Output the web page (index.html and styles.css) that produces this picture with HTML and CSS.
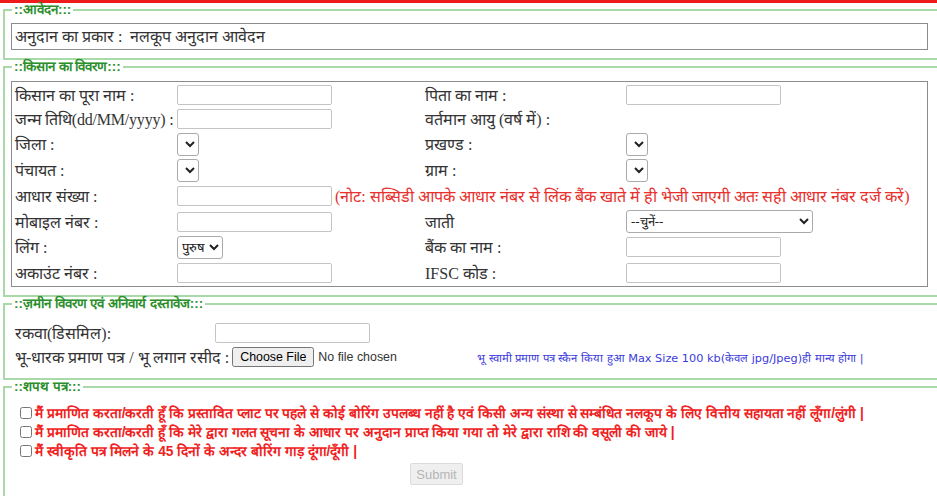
FILE: index.html
```html
<!DOCTYPE html>
<html lang="hi">
<head>
<meta charset="utf-8">
<title>नलकूप अनुदान आवेदन</title>
<link rel="stylesheet" href="styles.css">
</head>
<body>
<div class="topbar"></div>
<div class="page">
  <fieldset class="fs fs-apply">
    <legend>::आवेदन:::</legend>
    <div class="box type-box">अनुदान का प्रकार :&nbsp; नलकूप अनुदान आवेदन</div>
  </fieldset>

  <fieldset class="fs fs-farmer">
    <legend>::किसान का विवरण:::</legend>
    <div class="box farmer-grid">
      <div class="cell">किसान का पूरा नाम :</div>
      <div class="cell"><input class="txt" type="text"></div>
      <div class="cell">पिता का नाम :</div>
      <div class="cell"><input class="txt" type="text"></div>

      <div class="cell dob">जन्म तिथि(dd/MM/yyyy) :</div>
      <div class="cell"><input class="txt" type="text"></div>
      <div class="cell">वर्तमान आयु (वर्ष में) :</div>
      <div class="cell"></div>

      <div class="cell">जिला :</div>
      <div class="cell"><select class="sel sel-empty"></select></div>
      <div class="cell">प्रखण्ड :</div>
      <div class="cell"><select class="sel sel-empty"></select></div>

      <div class="cell">पंचायत :</div>
      <div class="cell"><select class="sel sel-empty"></select></div>
      <div class="cell">ग्राम :</div>
      <div class="cell"><select class="sel sel-empty"></select></div>

      <div class="cell">आधार संख्या :</div>
      <div class="cell span3"><input class="txt" type="text"><span class="note">(नोट: सब्सिडी आपके आधार नंबर से लिंक बैंक खाते में ही भेजी जाएगी अतः सही आधार नंबर दर्ज करें)</span></div>

      <div class="cell">मोबाइल नंबर :</div>
      <div class="cell"><input class="txt" type="text"></div>
      <div class="cell">जाती</div>
      <div class="cell"><select class="sel sel-caste"><option>--चुनें--</option></select></div>

      <div class="cell">लिंग :</div>
      <div class="cell"><select class="sel sel-gender"><option>पुरुष</option></select></div>
      <div class="cell">बैंक का नाम :</div>
      <div class="cell"><input class="txt" type="text"></div>

      <div class="cell">अकाउंट नंबर :</div>
      <div class="cell"><input class="txt" type="text"></div>
      <div class="cell">IFSC कोड :</div>
      <div class="cell"><input class="txt" type="text"></div>
    </div>
  </fieldset>

  <fieldset class="fs fs-land">
    <legend>::ज़मीन विवरण एवं अनिवार्य दस्तावेज:::</legend>
    <div class="land-row">
      <span class="land-label">रकवा(डिसमिल):</span>
      <input class="txt" type="text">
    </div>
    <div class="land-row">
      <span class="doc-group">भू-धारक प्रमाण पत्र / भू लगान रसीद : <input class="file" type="file"></span>
      <span class="doc-hint">भू स्वामी प्रमाण पत्र स्कैन किया हुआ Max Size 100 kb(केवल jpg/Jpeg)ही मान्य होगा |</span>
    </div>
  </fieldset>

  <fieldset class="fs fs-oath">
    <legend>::शपथ पत्र:::</legend>
    <label class="oath"><input type="checkbox">मैं प्रमाणित करता/करती हूँ कि प्रस्तावित प्लाट पर पहले से कोई बोरिंग उपलब्ध नहीं है एवं किसी अन्य संस्था से सम्बंधित नलकूप के लिए वित्तीय सहायता नहीं लूँगा/लुंगी |</label>
    <label class="oath"><input type="checkbox">मैं प्रमाणित करता/करती हूँ कि मेरे द्वारा गलत सूचना के आधार पर अनुदान प्राप्त किया गया तो मेरे द्वारा राशि की वसूली की जाये |</label>
    <label class="oath"><input type="checkbox">मैं स्वीकृति पत्र मिलने के 45 दिनों के अन्दर बोरिंग गाड़ दूंगा/दूँगी |</label>
    <button class="submit" type="button" disabled>Submit</button>
  </fieldset>
</div>
</body>
</html>
```

FILE: styles.css
```css
html, body {
  margin: 0;
  padding: 0;
  overflow: hidden;
  background: #fff;
}
body {
  width: 937px;
  height: 496px;
  font-family: "Liberation Serif", serif;
  font-size: 16px;
  color: #333;
}
.topbar {
  height: 3px;
  background: #ee1b1b;
}
.page {
  width: 960px;
  padding-left: 3px;
}
.fs {
  margin: 0;
  min-width: 0;
  width: 947px;
  box-sizing: border-box;
  border: 2px solid #a9d8a9;
  padding: 6px 20px 8px 6px;
}
.fs legend {
  font-family: "Liberation Sans", sans-serif;
  font-weight: bold;
  font-size: 13.4px;
  line-height: 14px;
  color: #2b8f2b;
  padding: 0 2px;
  margin-left: 1px;
}
.box {
  border: 1px solid #8c8c8c;
  box-sizing: border-box;
}
.type-box {
  height: 27px;
  line-height: 25px;
  padding-left: 3px;
  color: #333;
}
.fs-farmer {
  padding-top: 7px;
}
.farmer-grid {
  display: grid;
  grid-template-columns: 162px 248px 201px 1fr;
  grid-template-rows: 25px 24px 26px 26px 26px 25px 26px 26px;
  align-items: center;
  padding-left: 3px;
}
.cell {
  display: flex;
  align-items: center;
  white-space: nowrap;
}
.dob {
  letter-spacing: -0.2px;
}
.span3 {
  grid-column: span 3;
}
.txt {
  width: 155px;
  height: 20px;
  box-sizing: border-box;
  border: 1px solid #c4c4c4;
  border-radius: 2px;
  padding: 1px 2px;
  margin: 0;
  background: #fff;
}
.sel {
  height: 23px;
  margin: 0;
  font-size: 13px;
  font-family: "Liberation Serif", serif;
  color: #222;
  border: 1px solid #aaa;
  border-radius: 3px;
  background: #fff;
}
.sel-empty {
  width: 22px;
}
.sel-gender {
  width: 46px;
}
.sel-caste {
  width: 187px;
}
.note {
  margin-left: 3px;
  color: #e8302c;
  font-size: 16.1px;
}
.fs-land {
  padding-top: 10px;
  padding-bottom: 9px;
}
.land-row {
  height: 24px;
  display: flex;
  align-items: center;
  padding-left: 4px;
  white-space: nowrap;
}
.land-label {
  width: 200px;
}
.doc-group {
  width: 462px;
  display: flex;
  align-items: center;
}
.file {
  margin-left: 3px;
  font-family: "Liberation Sans", sans-serif;
  font-size: 12.4px;
}
.doc-hint {
  font-family: "DejaVu Sans", sans-serif;
  font-size: 11.3px;
  color: #3b3bdc;
}
.fs-oath {
  padding-top: 9px;
  padding-bottom: 20px;
}
.oath {
  display: flex;
  align-items: center;
  height: 19px;
  padding-left: 9px;
  font-family: "Liberation Sans", sans-serif;
  font-weight: bold;
  font-size: 13.8px;
  color: #f01e1e;
  white-space: nowrap;
}
.oath input {
  width: 12px;
  height: 12px;
  margin: 0 3px 0 0;
}
.submit {
  display: block;
  margin: 3px 0 0 399px;
  width: 53px;
  height: 22px;
  padding: 0;
  font-family: "Liberation Sans", sans-serif;
  font-size: 13px;
  color: #b5b5b5;
  background: #efefef;
  border: 1px solid #dcdcdc;
  border-radius: 2px;
}
```
